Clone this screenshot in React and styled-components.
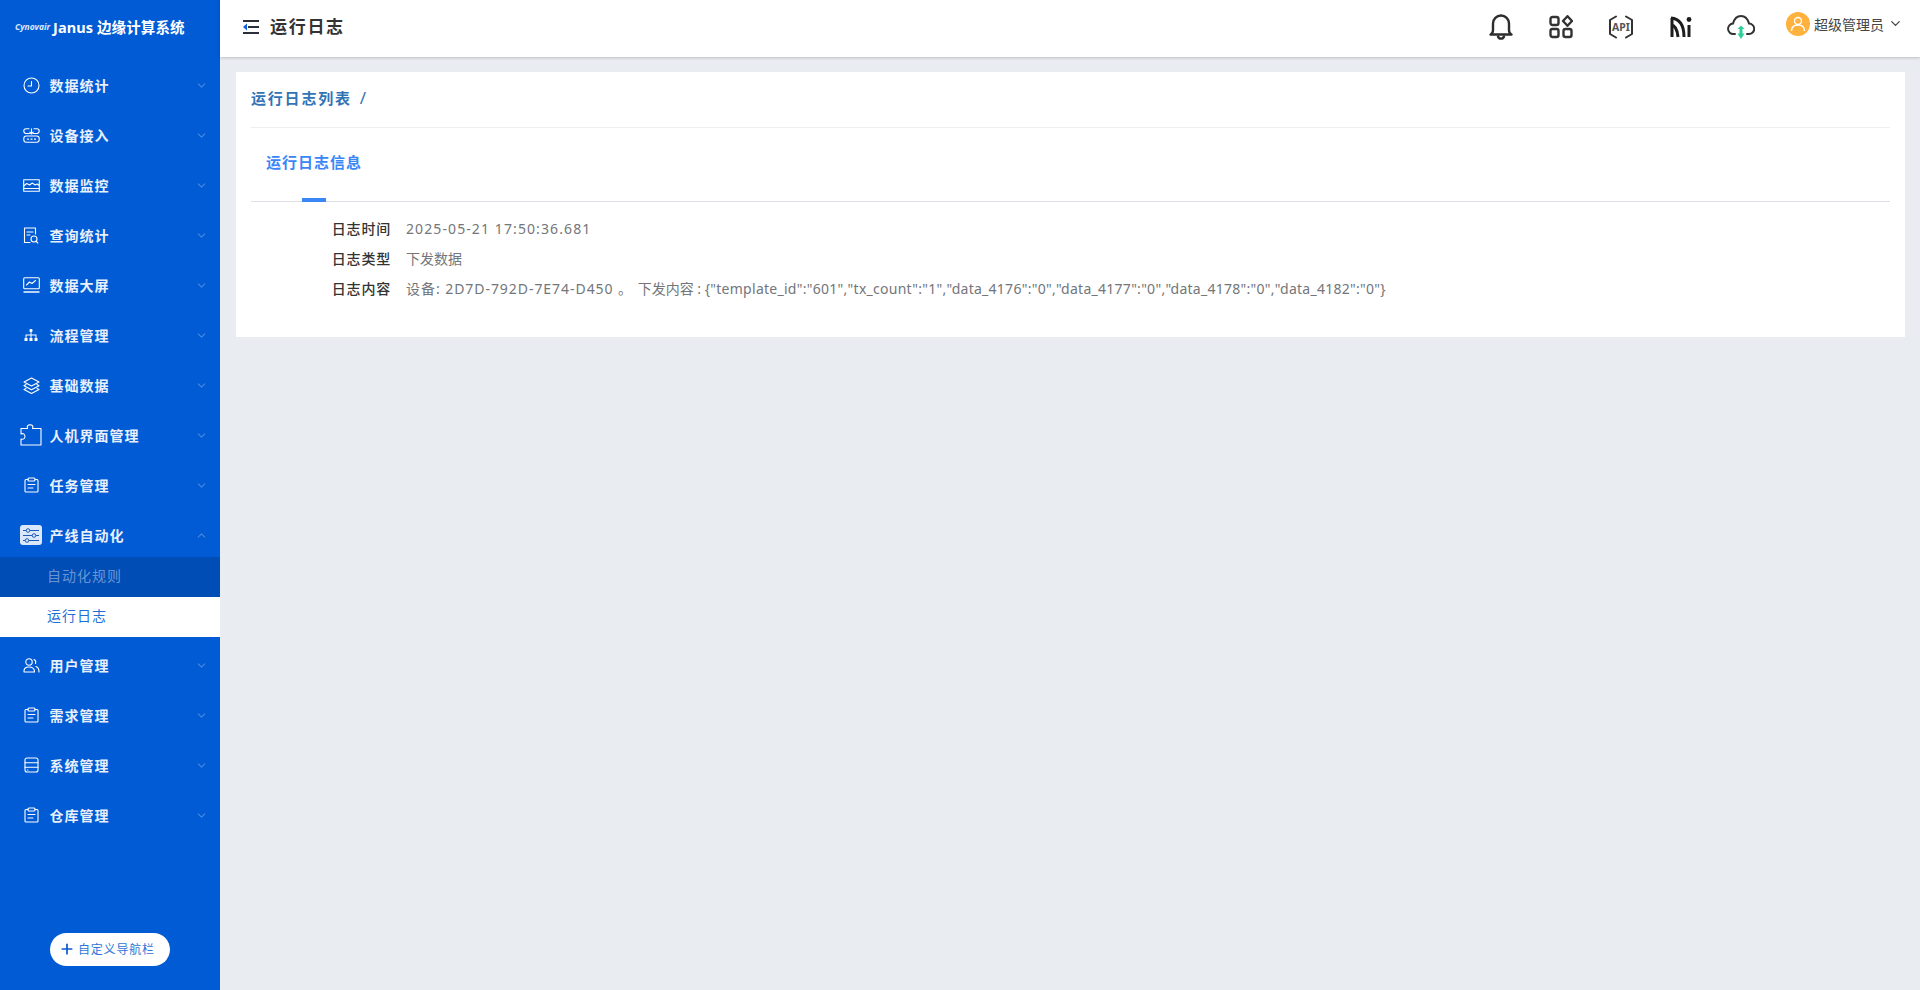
import React from 'react';
import styled, { createGlobalStyle } from 'styled-components';
import { ChevronDown, ChevronUp, Plus } from 'lucide-react';

const GlobalStyle = createGlobalStyle`
  html, body {
    margin: 0;
    padding: 0;
    height: 100%;
    overflow: hidden;
    background: #e9ecf1;
    font-family: "Noto Sans", "Noto Sans CJK SC", "Open Sans", sans-serif;
  }
  * { box-sizing: border-box; }
`;

const Page = styled.div`
  display: flex;
  width: 1920px;
  height: 990px;
`;

const Sidebar = styled.aside`
  display: flex;
  flex-direction: column;
  flex: none;
  width: 220px;
  height: 990px;
  background: #005bd4;
`;

const Logo = styled.div`
  display: flex;
  align-items: center;
  height: 52px;
  padding-left: 15px;
  color: #fff;
`;

const LogoMark = styled.span`
  width: 38px;
  font-size: 8.5px;
  font-style: italic;
  font-weight: 700;
  color: #dce9fb;
`;

const LogoText = styled.span`
  font-size: 14.5px;
  font-weight: 700;
  letter-spacing: 0.1px;
  white-space: nowrap;
`;

const Menu = styled.nav`
  display: flex;
  flex: 1;
  flex-direction: column;
  padding-top: 13px;
`;

const MenuRow = styled.div`
  display: flex;
  flex: none;
  align-items: center;
  height: 40px;
  margin-bottom: ${(p) => (p.$open ? '2px' : '10px')};
  padding: 0 12px 0 20px;
  color: #e8f0fc;
  font-size: 14px;
  font-weight: 600;
  letter-spacing: 1px;
`;

const IconCell = styled.span`
  display: flex;
  flex: none;
  align-items: center;
  justify-content: center;
  width: 22px;
  margin-right: 7.5px;
`;

const Label = styled.span`
  flex: 1;
  white-space: nowrap;
`;

const Caret = styled.span`
  display: flex;
  color: rgba(255, 255, 255, 0.28);
`;

const SubItem = styled.div`
  display: flex;
  align-items: center;
  height: 40px;
  padding: 0 0 5px 47px;
  font-size: 14px;
  letter-spacing: 1px;
  color: ${(p) => (p.$active ? '#1f6fd8' : 'rgba(255, 255, 255, 0.42)')};
  background: ${(p) => (p.$active ? '#fff' : '#004db6')};
  &:last-child {
    margin-bottom: 8px;
  }
`;

const SubMenu = styled.div`
  display: flex;
  flex: none;
  flex-direction: column;
`;

const AddNav = styled.div`
  display: flex;
  align-items: center;
  align-self: center;
  gap: 3px;
  width: 120px;
  height: 33px;
  margin-bottom: 24px;
  padding: 0 0 2px 9px;
  border-radius: 17px;
  background: #fff;
  color: #2d76d9;
  font-size: 12px;
  letter-spacing: 0.8px;
  white-space: nowrap;
  svg {
    color: #0b5ad0;
  }
`;

const Main = styled.main`
  display: flex;
  flex: 1;
  flex-direction: column;
  min-width: 0;
`;

const Header = styled.header`
  display: flex;
  flex: none;
  align-items: center;
  height: 57px;
  padding: 0 17px 4px 23px;
  background: #fff;
  box-shadow: 0 1px 3px rgba(0, 0, 0, 0.2);
`;

const PageTitle = styled.h1`
  flex: 1;
  margin: 0 0 2px 11px;
  color: #333;
  font-size: 17px;
  font-weight: 600;
  letter-spacing: 1.7px;
`;

const HeaderIcons = styled.div`
  display: flex;
  align-items: center;
  gap: 30px;
  margin-right: 30px;
`;

const HeaderIcon = styled.span`
  display: flex;
  align-items: center;
  justify-content: center;
  width: 30px;
  height: 30px;
`;

const User = styled.div`
  display: flex;
  align-items: center;
  gap: 4px;
  margin-bottom: 6px;
  color: #444;
  font-size: 14px;
`;

const Avatar = styled.span`
  display: flex;
  align-items: center;
  justify-content: center;
  width: 24px;
  height: 24px;
  border-radius: 50%;
  background: #ffb13d;
`;

const Content = styled.div`
  padding: 15px 15px 0 16px;
`;

const Card = styled.section`
  height: 265px;
  padding: 0 15px;
  background: #fff;
`;

const Breadcrumb = styled.div`
  display: flex;
  align-items: center;
  gap: 8px;
  height: 56px;
  padding-bottom: 4px;
  border-bottom: 1px solid #eceef1;
  color: #3273b5;
  font-size: 15px;
  font-weight: 600;
  letter-spacing: 1.8px;
`;

const Slash = styled.span`
  font-size: 17px;
  font-weight: 400;
`;

const Tabs = styled.div`
  position: relative;
  height: 74px;
  padding: 23px 0 0 15px;
  border-bottom: 1px solid #dcdfe4;
`;

const TabTitle = styled.span`
  color: #3b86f5;
  font-size: 15px;
  font-weight: 600;
  letter-spacing: 1px;
`;

const TabBar = styled.span`
  position: absolute;
  left: 51px;
  bottom: -1px;
  width: 24px;
  height: 4px;
  background: #3b86f5;
`;

const InfoList = styled.dl`
  display: grid;
  grid-template-columns: 140px 1fr;
  grid-auto-rows: 30px;
  column-gap: 15px;
  margin: 11px 0 0;
  font-size: 14px;
`;

const InfoLabel = styled.dt`
  align-self: center;
  color: #333;
  text-align: right;
  letter-spacing: 0.8px;
  font-weight: 500;
`;

const InfoValue = styled.dd`
  align-self: center;
  margin: 0;
  color: #73767a;
  white-space: nowrap;
`;

// digits and ids are set wider than the CJK text in the reference
const Spaced = styled.span`
  letter-spacing: ${(p) => p.$gap || '1.1px'};
`;

const JsonText = styled.span`
  letter-spacing: 0.27px;
`;

const stroke = { fill: 'none', stroke: '#fff', strokeWidth: 1.1, strokeLinecap: 'round', strokeLinejoin: 'round' };

const ClockIcon = () => (
  <svg width="17" height="17" viewBox="0 0 17 17" {...stroke}>
    <circle cx="8.5" cy="8.5" r="7.5" />
    <path d="M8.5 4.5v4.5H5" />
  </svg>
);

const DeviceIcon = () => (
  <svg width="17" height="15" viewBox="0 0 17 15" {...stroke}>
    <path d="M6 .8H3Q.8.8.8 3T3 5.500H6.500M11 .8h3Q16.200.8 16.200 3T14 5.500H10.500M8.500.8V6M6.800 4.200l1.700 1.800 1.700-1.800" />
    <rect x="0.800" y="8" width="15.400" height="6.200" rx="2.500" />
    <path d="M4.500 11.100h1M8 11.100h1M11.500 11.100h1" strokeWidth="1.400" />
  </svg>
);

const MonitorIcon = () => (
  <svg width="17" height="13" viewBox="0 0 17 13" {...stroke} strokeLinecap="butt">
    <rect x="0.700" y="0.700" width="15.600" height="11.600" />
    <path d="M.7 7l3-2.500 3 1.500 2.500-2 3 2 2-1 2 1.500M.7 9.500h15.600" />
  </svg>
);

const QueryIcon = () => (
  <svg width="16" height="17" viewBox="0 0 16 17" {...stroke}>
    <path d="M7 15.500H1.500V1h11v6M4 5h6M4 8h3" />
    <circle cx="11" cy="12" r="3" />
    <path d="M13 14.200l1.800 1.800" />
  </svg>
);

const ScreenIcon = () => (
  <svg width="17" height="16" viewBox="0 0 17 16" {...stroke}>
    <rect x="0.700" y="0.700" width="15.600" height="11" rx="1" />
    <path d="M3.500 8l3-3 2.500 1.500 3.500-3" />
    <path d="M.5 15h16" stroke="#b9d3f6" strokeWidth="2" strokeLinecap="butt" />
  </svg>
);

const FlowIcon = () => (
  <svg width="14" height="12" viewBox="0 0 14 12" fill="#fff">
    <rect x="5.500" y="0" width="3" height="3" rx="1" />
    <rect x="0.500" y="9" width="3" height="3" />
    <rect x="5.500" y="9" width="3" height="3" />
    <rect x="10.500" y="9" width="3" height="3" />
    <path d="M6.500 3h1v2.500h5V9h-1V6.500h-4V9h-1V6.500h-4V9h-1V5.500h5z" />
  </svg>
);

const LayersIcon = () => (
  <svg width="17" height="17" viewBox="0 0 17 17" {...stroke}>
    <path d="M8.500 1L16 5l-7.500 4L1 5zM3 7.500L1 8.750l7.500 4 7.500-4-2-1.250M3 11.500l-2 1 7.500 4 7.500-4-2-1" />
  </svg>
);

const PuzzleIcon = () => (
  <svg width="22" height="22" viewBox="0 0 22 22" {...stroke}>
    <path d="M1 4.500h6.500Q6.500 1 10 .8q4 .2 2.500 3.700H21V21H1v-6q3.500 1 4-2.500Q4.500 8.500 1 10z" />
  </svg>
);

const ClipboardIcon = () => (
  <svg width="15" height="16" viewBox="0 0 15 16" {...stroke}>
    <path d="M4 2.500H2Q1 2.500 1 3.500v10.500q0 1 1 1h11q1 0 1-1V3.500q0-1-1-1h-2" />
    <rect x="4" y="1" width="7" height="3" rx="1" />
    <path d="M4 7.500h7M4 11h5" />
  </svg>
);

const SlidersIcon = () => (
  <svg width="22" height="20" viewBox="0 0 22 20">
    <rect width="22" height="20" rx="3" fill="#dbe8fb" />
    <g fill="none" stroke="#1b5cb8" strokeWidth="1">
      <path d="M3 5.500h16M3 10.500h16M3 15.500h16" />
      <circle cx="8" cy="5.500" r="1.800" fill="#dbe8fb" />
      <circle cx="14" cy="10.500" r="1.800" fill="#dbe8fb" />
      <circle cx="7" cy="15.500" r="1.800" fill="#dbe8fb" />
    </g>
  </svg>
);

const UsersIcon = () => (
  <svg width="17" height="15" viewBox="0 0 17 15" {...stroke}>
    <circle cx="6" cy="4" r="3.200" />
    <path d="M1 14q-.5-5 5-5t5.500 5zM11 1.500q2.500 1 1.500 4M13 8.500q3 1 3 5.500" />
  </svg>
);

const DbIcon = () => (
  <svg width="15" height="16" viewBox="0 0 15 16" {...stroke}>
    <rect x="1" y="1" width="13" height="14" rx="2" />
    <path d="M1 5.700h13M1 10.300h13M3.500 13h.5" />
  </svg>
);

const Collapse = () => (
  <svg width="16" height="14" viewBox="0 0 16 14">
    <path d="M0 0h16v2H0zM5 6h11v2H5zM0 12h16v2H0z" fill="#2a2f38" />
    <path d="M4 3.500v7L0 7z" fill="#0b62e0" />
  </svg>
);

const Bell = () => (
  <svg width="24" height="26" viewBox="0 0 24 26" fill="none" stroke="#2d2d2d" strokeWidth="2.400" strokeLinecap="round" strokeLinejoin="round">
    <path d="M1.500 20.500q2.500-1 2.500-4.500V9.500a8 8 0 0 1 16 0V16q0 3.500 2.500 4.500z" />
    <path d="M9 22.500a3.200 3.200 0 0 0 6 0" />
  </svg>
);

const Apps = () => (
  <svg width="24" height="24" viewBox="0 0 24 24" fill="none" stroke="#333" strokeWidth="2.400">
    <rect x="1.500" y="2" width="8" height="8" rx="2" />
    <rect x="1.500" y="14" width="8" height="8" rx="2" />
    <rect x="14.500" y="14" width="8" height="8" rx="2" />
    <path d="M18.500 1.200L23 6l-4.500 4.800L14 6z" strokeLinejoin="round" />
  </svg>
);

const Api = () => (
  <svg width="26" height="24" viewBox="0 0 26 24">
    <path d="M8 1.500L2 5v14l6 3.500M18 1.500L24 5v14l-6 3.500" fill="none" stroke="#333" strokeWidth="2" strokeLinecap="round" strokeLinejoin="round" />
    <text x="13" y="15.500" fontSize="10.500" fontWeight="700" fill="#555" textAnchor="middle" fontFamily="Noto Sans">API</text>
  </svg>
);

const Nw = () => (
  <svg width="22" height="22" viewBox="0 0 22 22" fill="none" stroke="#1d1d1d" strokeWidth="3">
    <path d="M2 21V2" />
    <path d="M1 2q13 1 13 19" />
    <path d="M1 9q6 .5 7 12" />
    <path d="M19 9v12" />
    <circle cx="19" cy="3.500" r="2.400" fill="#1d1d1d" stroke="none" />
  </svg>
);

const Cloud = () => (
  <svg width="28" height="28" viewBox="0 0 28 28" fill="none">
    <path d="M8 21H6.500a5.200 5.200 0 0 1-.5-10.400Q8 3 14 3q6 0 8 7.600a5.200 5.200 0 0 1 0 10.400h-2" stroke="#333" strokeWidth="2" strokeLinecap="round" />
    <path d="M14 12.500l3.500 3.500h-2v4.500h2L14 26l-3.500-5.500h2V16h-2z" fill="#2fcf9a" />
  </svg>
);

const Person = () => (
  <svg width="16" height="16" viewBox="0 0 16 16" fill="none" stroke="#fff" strokeWidth="1.400">
    <circle cx="8" cy="5" r="3.500" />
    <path d="M1.500 15q0-6 6.500-6t6.500 6" />
  </svg>
);

const menuTop = [
  { label: '数据统计', Icon: ClockIcon },
  { label: '设备接入', Icon: DeviceIcon },
  { label: '数据监控', Icon: MonitorIcon },
  { label: '查询统计', Icon: QueryIcon },
  { label: '数据大屏', Icon: ScreenIcon },
  { label: '流程管理', Icon: FlowIcon },
  { label: '基础数据', Icon: LayersIcon },
  { label: '人机界面管理', Icon: PuzzleIcon },
  { label: '任务管理', Icon: ClipboardIcon },
];

const menuBottom = [
  { label: '用户管理', Icon: UsersIcon },
  { label: '需求管理', Icon: ClipboardIcon },
  { label: '系统管理', Icon: DbIcon },
  { label: '仓库管理', Icon: ClipboardIcon },
];

const json = '{"template_id":"601","tx_count":"1","data_4176":"0","data_4177":"0","data_4178":"0","data_4182":"0"}';

const Item = ({ label, Icon, open }) => (
  <MenuRow $open={open}>
    <IconCell>
      <Icon />
    </IconCell>
    <Label>{label}</Label>
    <Caret>{open ? <ChevronUp size={13} /> : <ChevronDown size={13} />}</Caret>
  </MenuRow>
);

export default function App() {
  return (
    <Page>
      <GlobalStyle />
      <Sidebar>
        <Logo>
          <LogoMark>Cynovair</LogoMark>
          <LogoText>Janus 边缘计算系统</LogoText>
        </Logo>
        <Menu>
          {menuTop.map((m) => (
            <Item key={m.label} {...m} />
          ))}
          <Item label="产线自动化" Icon={SlidersIcon} open />
          <SubMenu>
            <SubItem>自动化规则</SubItem>
            <SubItem $active>运行日志</SubItem>
          </SubMenu>
          {menuBottom.map((m) => (
            <Item key={m.label} {...m} />
          ))}
        </Menu>
        <AddNav>
          <Plus size={16} strokeWidth={2.6} />
          自定义导航栏
        </AddNav>
      </Sidebar>
      <Main>
        <Header>
          <Collapse />
          <PageTitle>运行日志</PageTitle>
          <HeaderIcons>
            <HeaderIcon><Bell /></HeaderIcon>
            <HeaderIcon><Apps /></HeaderIcon>
            <HeaderIcon><Api /></HeaderIcon>
            <HeaderIcon><Nw /></HeaderIcon>
            <HeaderIcon><Cloud /></HeaderIcon>
          </HeaderIcons>
          <User>
            <Avatar><Person /></Avatar>
            超级管理员
            <ChevronDown size={15} />
          </User>
        </Header>
        <Content>
          <Card>
            <Breadcrumb>
              运行日志列表
              <Slash>/</Slash>
            </Breadcrumb>
            <Tabs>
              <TabTitle>运行日志信息</TabTitle>
              <TabBar />
            </Tabs>
            <InfoList>
              <InfoLabel>日志时间</InfoLabel>
              <InfoValue><Spaced>2025-05-21 17:50:36.681</Spaced></InfoValue>
              <InfoLabel>日志类型</InfoLabel>
              <InfoValue>下发数据</InfoValue>
              <InfoLabel>日志内容</InfoLabel>
              <InfoValue>
                <Spaced $gap="0.95px">设备: 2D7D-792D-7E74-D450 。 </Spaced>
                下发内容 : <JsonText>{json}</JsonText>
              </InfoValue>
            </InfoList>
          </Card>
        </Content>
      </Main>
    </Page>
  );
}
